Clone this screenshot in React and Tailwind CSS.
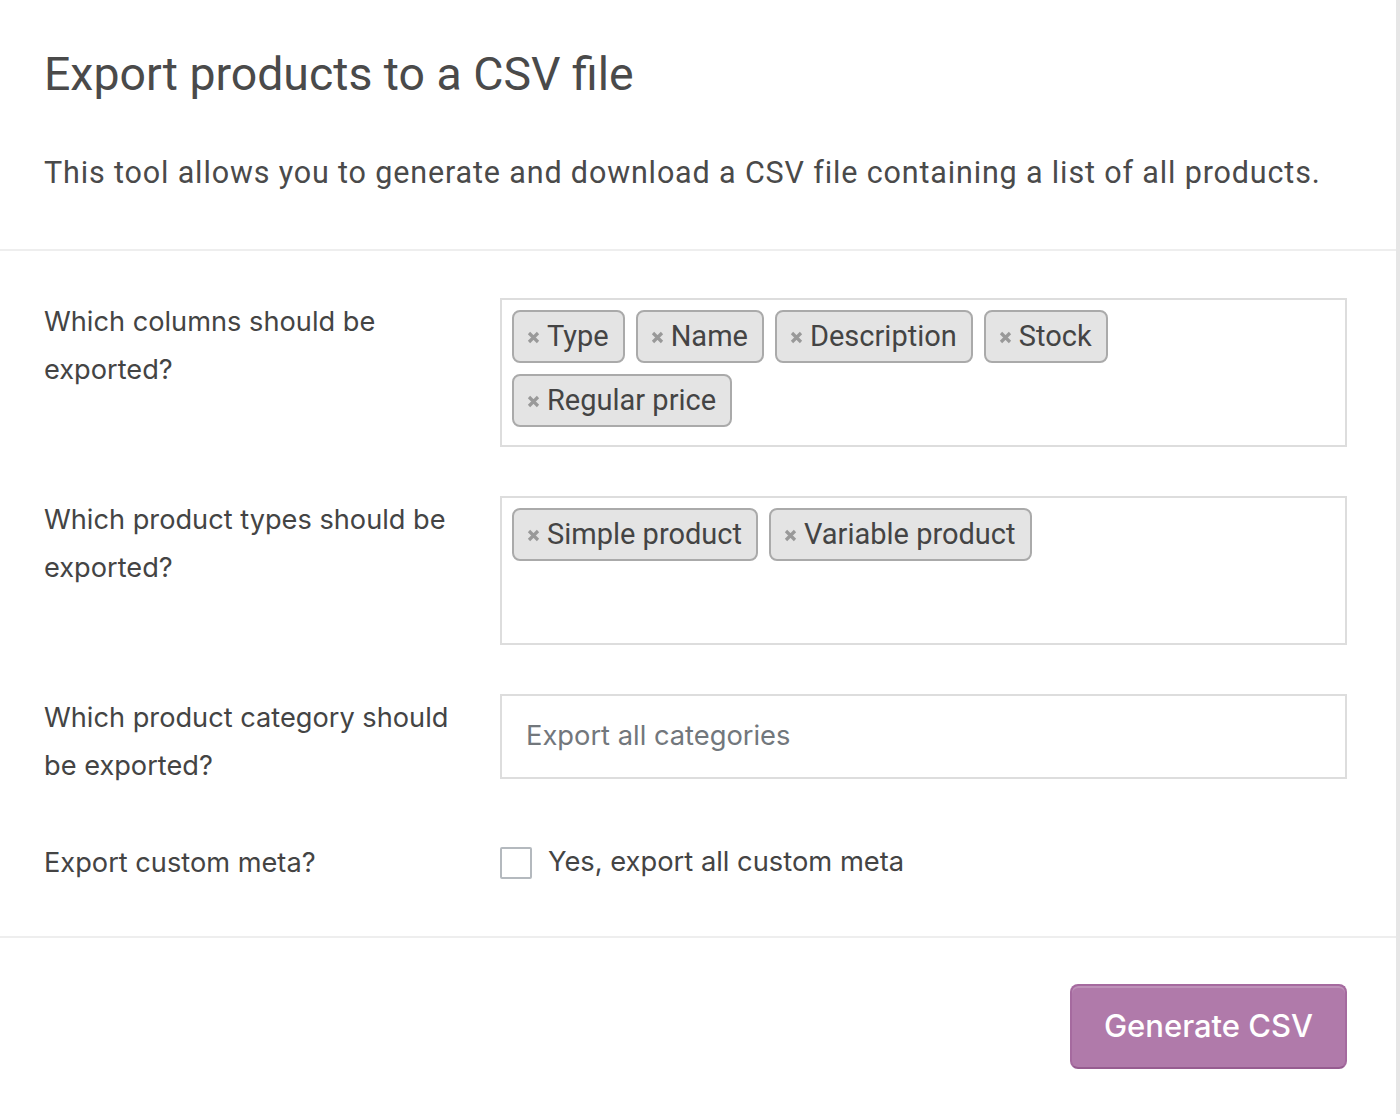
import React from "react";

const labelFont = { fontFamily: "Inter, 'Noto Sans', sans-serif" };

const columns = ["Type", "Name", "Description", "Stock", "Regular price"];
const productTypes = ["Simple product", "Variable product"];

// Select2-style chip with a little remove cross
const Token = ({ label }) => (
  <span className="flex h-[53px] items-center rounded-[8px] border-2 border-[#aaaaaa] bg-[#e4e4e4] pl-[13px] pr-[14px] text-[29px] leading-none text-[#444444]">
    <svg width="13" height="13" viewBox="0 0 13 13" className="mr-[7px] mt-[3px]">
      <path d="M2 2 L11 11 M11 2 L2 11" stroke="#999999" strokeWidth="3.2" strokeLinecap="butt" />
    </svg>
    {label}
  </span>
);

const TokenBox = ({ items }) => (
  <div
    className="flex min-h-[149px] w-[847px] flex-wrap content-start gap-x-[11px] gap-y-[11px] border-2 border-[#dddddd] bg-white pb-[18px] pl-[10px] pr-[16px] pt-[10px]"
    style={{ fontFamily: "Roboto, sans-serif" }}
  >
    {items.map((item) => (
      <Token key={item} label={item} />
    ))}
  </div>
);

const FieldRow = ({ label, children }) => (
  <div className="flex items-start">
    <div className="w-[456px] pr-[36px] text-[27.2px] leading-[48px] text-[#444444]" style={labelFont}>
      {label}
    </div>
    {children}
  </div>
);

const App = () => {
  return (
    <div className="flex min-h-[1114px] bg-[#e6e6e6]">
      <div className="w-[1396px] bg-white">
        {/* header */}
        <div className="border-b-2 border-[#eeeeee] px-[44px] pb-[60px] pt-[51px]" style={{ fontFamily: "Roboto, sans-serif" }}>
          <h1 className="text-[46.4px] leading-none text-[#4a4a4a]">Export products to a CSV file</h1>
          <p className="mt-[61px] text-[30.5px] leading-none tracking-[0.85px] text-[#4a4a4a]">
            This tool allows you to generate and download a CSV file containing a list of all products.
          </p>
        </div>

        {/* form fields */}
        <div className="flex flex-col gap-[49px] border-b-2 border-[#eeeeee] px-[44px] pb-[49px] pt-[47px]">
          <FieldRow label="Which columns should be exported?">
            <TokenBox items={columns} />
          </FieldRow>
          <FieldRow label="Which product types should be exported?">
            <TokenBox items={productTypes} />
          </FieldRow>
          <FieldRow label="Which product category should be exported?">
            <div className="flex h-[85px] w-[847px] items-center border-2 border-[#dddddd] bg-white pl-[24px] text-[27.3px] text-[#72777c]" style={labelFont}>
              Export all categories
            </div>
          </FieldRow>
          <FieldRow label="Export custom meta?">
            <label className="flex h-[48px] items-center text-[27.3px] text-[#444444]" style={labelFont}>
              <span className="mr-[16px] block h-[32px] w-[32px] rounded-[2px] border-2 border-[#b4b9be] bg-white" />
              Yes, export all custom meta
            </label>
          </FieldRow>
        </div>

        {/* actions */}
        <div className="flex justify-end bg-white pb-[45px] pr-[49px] pt-[46px]">
          <button
            className="flex h-[85px] w-[277px] items-center justify-center rounded-[8px] border-2 border-[#a56a9f] border-b-[#965c90] bg-[#b07aaa] text-[31px] font-medium text-white shadow-[inset_0_2px_0_rgba(255,255,255,0.18)]"
            style={{ fontFamily: "Inter, sans-serif" }}
          >
            Generate CSV
          </button>
        </div>
      </div>
    </div>
  );
};

export default App;
